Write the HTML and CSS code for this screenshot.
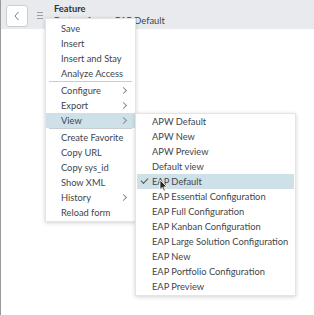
FILE: index.html
```html
<!DOCTYPE html>
<html>
    <head>
        <meta charset="utf-8" />
        <title>Feature</title>
        <link rel="stylesheet" href="styles.css">
    </head>

    <body>
        <div class="page">
            <!-- header -->
            <div class="header">
                <button class="back">
                    <svg width="8" height="10" viewBox="0 0 8 10"><path d="M5.5 1 L2 5 L5.5 9" fill="none" stroke="#7a8288" stroke-width="1"/></svg>
                </button>
                <span class="burger"></span>
                <div class="titles">
                    <div class="title">Feature</div>
                    <div class="subtitle">Feature form - EAP Default</div>
                </div>
            </div>

            <!-- context menu -->
            <div class="menu">
                <div class="item">Save</div>
                <div class="item">Insert</div>
                <div class="item">Insert and Stay</div>
                <div class="item">Analyze Access</div>
                <div class="sep"></div>
                <div class="item sub">Configure</div>
                <div class="item sub">Export</div>
                <div class="item sub active">View</div>
                <div class="sep"></div>
                <div class="item">Create Favorite</div>
                <div class="item">Copy URL</div>
                <div class="item">Copy sys_id</div>
                <div class="item">Show XML</div>
                <div class="item sub">History</div>
                <div class="item">Reload form</div>
            </div>

            <!-- view submenu -->
            <div class="submenu">
                <div class="item">APW Default</div>
                <div class="item">APW New</div>
                <div class="item">APW Preview</div>
                <div class="item">Default view</div>
                <div class="item checked active">EAP Default</div>
                <div class="item">EAP Essential Configuration</div>
                <div class="item">EAP Full Configuration</div>
                <div class="item">EAP Kanban Configuration</div>
                <div class="item">EAP Large Solution Configuration</div>
                <div class="item">EAP New</div>
                <div class="item">EAP Portfolio Configuration</div>
                <div class="item">EAP Preview</div>
            </div>

            <svg class="cursor" width="9" height="13" viewBox="0 0 9 13"><path d="M1 1 L1 10.5 L3.3 8.4 L4.9 12 L6.3 11.4 L4.8 7.9 L7.8 7.9 Z" fill="#222" stroke="#fff" stroke-width="0.8"/></svg>
        </div>
    </body>
</html>
```

FILE: styles.css
```css
body {
    margin: 0;
    font-family: Lato, "Open Sans", sans-serif;
    color: #41464b;
    background: #fff;
}

.page {
    position: relative;
    width: 314px;
    height: 315px;
    border-left: 1px solid #9a9a9a;
    box-sizing: border-box;
    overflow: hidden;
}

.header {
    display: grid;
    grid-template-columns: 22px 6px auto;
    column-gap: 0;
    align-items: start;
    height: 29px;
    background: #e8eaed;
    padding: 5px 0 0 5px;
    box-sizing: border-box;
}

.back {
    display: flex;
    align-items: center;
    justify-content: center;
    width: 22px;
    height: 22px;
    margin: 0;
    padding: 0;
    background: #fff;
    border: 1px solid #c9ced3;
    border-radius: 3px;
}

.burger {
    display: block;
    width: 6px;
    height: 5px;
    margin: 7px 0 0 9px;
    border-top: 1px solid #9aa0a6;
    border-bottom: 1px solid #9aa0a6;
    background: linear-gradient(#9aa0a6, #9aa0a6) center / 100% 1px no-repeat;
}

.titles {
    margin: -2px 0 0 20px;
    font-size: 9.3px;
    line-height: 12px;
    white-space: nowrap;
}

.title {
    font-weight: bold;
    color: #2e3338;
}

.subtitle {
    color: #41464b;
}

.menu,
.submenu {
    position: absolute;
    background: #fff;
    border: 1px solid #e2e4e6;
    box-shadow: 0 1px 4px rgba(0, 0, 0, 0.18);
    font-size: 9.3px;
}

.menu {
    left: 44px;
    top: 18px;
    width: 89px;
    padding: 2px 0 1px;
}

.submenu {
    left: 134px;
    top: 113px;
    width: 159px;
    padding: 0 0 1px;
}

.item {
    position: relative;
    height: 15px;
    line-height: 15px;
    padding-left: 15px;
    white-space: nowrap;
}

.submenu .item {
    padding-left: 15px;
    margin: 0 1px;
}

.item.active {
    background: #cfe1e8;
}

.sub::after {
    content: "";
    position: absolute;
    right: 9px;
    top: 5px;
    width: 4px;
    height: 4px;
    border-top: 1px solid #8a9096;
    border-right: 1px solid #8a9096;
    transform: rotate(45deg);
}

.checked::before {
    content: "";
    position: absolute;
    left: 4px;
    top: 4px;
    width: 6px;
    height: 3px;
    border-left: 1px solid #555;
    border-bottom: 1px solid #555;
    transform: rotate(-45deg);
}

.sep {
    height: 1px;
    margin: 0 3px 1px;
    background: #c9cdd1;
}

.cursor {
    position: absolute;
    left: 158px;
    top: 179px;
}
```
